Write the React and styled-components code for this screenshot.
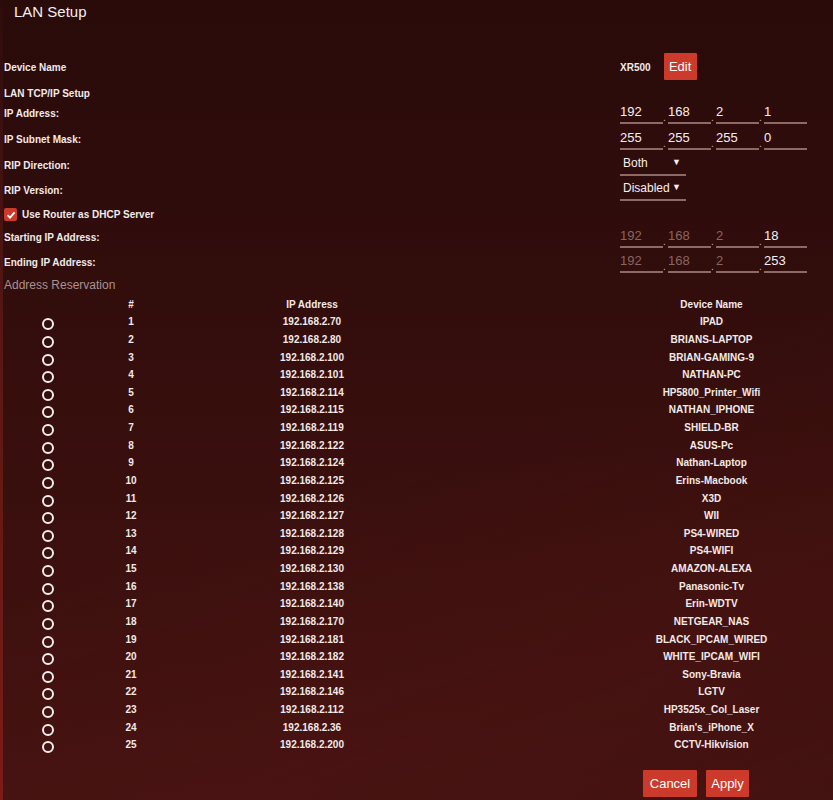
import styled, { createGlobalStyle } from 'styled-components'

const GlobalStyle = createGlobalStyle`
  html, body { margin: 0; padding: 0; }
  body {
    font-family: "Liberation Sans", Arial, sans-serif;
    background: #2c0c0b;
    color: #f2e9e8;
  }
`

const reservations = [
  ['192.168.2.70', 'IPAD'],
  ['192.168.2.80', 'BRIANS-LAPTOP'],
  ['192.168.2.100', 'BRIAN-GAMING-9'],
  ['192.168.2.101', 'NATHAN-PC'],
  ['192.168.2.114', 'HP5800_Printer_Wifi'],
  ['192.168.2.115', 'NATHAN_IPHONE'],
  ['192.168.2.119', 'SHIELD-BR'],
  ['192.168.2.122', 'ASUS-Pc'],
  ['192.168.2.124', 'Nathan-Laptop'],
  ['192.168.2.125', 'Erins-Macbook'],
  ['192.168.2.126', 'X3D'],
  ['192.168.2.127', 'WII'],
  ['192.168.2.128', 'PS4-WIRED'],
  ['192.168.2.129', 'PS4-WIFI'],
  ['192.168.2.130', 'AMAZON-ALEXA'],
  ['192.168.2.138', 'Panasonic-Tv'],
  ['192.168.2.140', 'Erin-WDTV'],
  ['192.168.2.170', 'NETGEAR_NAS'],
  ['192.168.2.181', 'BLACK_IPCAM_WIRED'],
  ['192.168.2.182', 'WHITE_IPCAM_WIFI'],
  ['192.168.2.141', 'Sony-Bravia'],
  ['192.168.2.146', 'LGTV'],
  ['192.168.2.112', 'HP3525x_Col_Laser'],
  ['192.168.2.36', "Brian's_iPhone_X"],
  ['192.168.2.200', 'CCTV-Hikvision'],
]

function IpField({ parts, dim }) {
  return (
    <IpGroup>
      {parts.map((p, i) => (
        <IpCell key={i}>
          {i > 0 && <Dot>.</Dot>}
          <Octet defaultValue={p} $dim={dim && i < 3} readOnly={dim && i < 3} />
        </IpCell>
      ))}
    </IpGroup>
  )
}

export default function App() {
  return (
    <Page>
      <GlobalStyle />
      <Title>LAN Setup</Title>

      <Form>
        <Row $h={29} $top={26} $center>
          <Label>Device Name</Label>
          <Control>
            <DeviceName>XR500</DeviceName>
            <RedButton $w={33}>Edit</RedButton>
          </Control>
        </Row>
        <Row $h={20}>
          <Label>LAN TCP/IP Setup</Label>
        </Row>
        <Row $h={26}>
          <Label>IP Address:</Label>
          <IpField parts={['192', '168', '2', '1']} />
        </Row>
        <Row $h={26}>
          <Label>IP Subnet Mask:</Label>
          <IpField parts={['255', '255', '255', '0']} />
        </Row>
        <Row $h={25}>
          <Label>RIP Direction:</Label>
          <Select>Both<Arrow>▼</Arrow></Select>
        </Row>
        <Row $h={26}>
          <Label>RIP Version:</Label>
          <Select>Disabled<Arrow>▼</Arrow></Select>
        </Row>
        <Row $h={21}>
          <CheckLabel>
            <Check>
              <svg width="10" height="10" viewBox="0 0 10 10">
                <path d="M1.5 5.2 L4 7.6 L8.6 2.4" fill="none" stroke="#fff" strokeWidth="1.8" />
              </svg>
            </Check>
            Use Router as DHCP Server
          </CheckLabel>
        </Row>
        <Row $h={25}>
          <Label>Starting IP Address:</Label>
          <IpField parts={['192', '168', '2', '18']} dim />
        </Row>
        <Row $h={24}>
          <Label>Ending IP Address:</Label>
          <IpField parts={['192', '168', '2', '253']} dim />
        </Row>
      </Form>

      <Section>Address Reservation</Section>

      <Table>
        <HeadRow>
          <Cell />
          <Cell>#</Cell>
          <Cell>IP Address</Cell>
          <Cell />
          <Cell>Device Name</Cell>
        </HeadRow>
        {reservations.map(([ip, name], i) => (
          <BodyRow key={i}>
            <Cell><Radio /></Cell>
            <Cell>{i + 1}</Cell>
            <Cell>{ip}</Cell>
            <Cell />
            <Cell>{name}</Cell>
          </BodyRow>
        ))}
      </Table>

      <Actions>
        <RedButton $w={54}>Cancel</RedButton>
        <RedButton $w={43}>Apply</RedButton>
      </Actions>
    </Page>
  )
}

const Page = styled.div`
  height: 800px;
  overflow: hidden;
  box-sizing: border-box;
  border-left: 3px solid #4a1410;
  border-image: linear-gradient(to bottom, #2c0c0b, #5a1814 45%, #7a1d16) 1;
  background:
    linear-gradient(160deg, rgba(255,255,255,0) 55%, rgba(120,30,25,0.1) 80%, rgba(255,255,255,0) 100%),
    linear-gradient(to bottom, #290b0a 0%, #310d0c 35%, #3c100e 70%, #431211 100%);
`

const Title = styled.h1`
  margin: 0;
  padding: 2px 0 0 11px;
  height: 24px;
  font-size: 15px;
  font-weight: normal;
  line-height: 20px;
  color: #f5eeee;
`

const Form = styled.div`
  display: flex;
  flex-direction: column;
`

const Row = styled.div`
  display: grid;
  grid-template-columns: 617px 1fr;
  align-items: ${p => (p.$center ? 'center' : 'start')};
  height: ${p => p.$h}px;
  margin-top: ${p => p.$top || 0}px;
`

const Label = styled.div`
  padding: 2px 0 0 1px;
  font-size: 10px;
  font-weight: bold;
  line-height: 21px;
  color: #f2e9e8;
`

const Control = styled.div`
  display: flex;
  align-items: center;
  gap: 13px;
`

const DeviceName = styled.span`
  font-size: 10px;
  font-weight: bold;
  padding-top: 2px;
`

const RedButton = styled.button`
  width: ${p => p.$w}px;
  height: 27px;
  padding: 0;
  border: none;
  border-radius: 1px;
  background: #cc3a2b;
  color: #fff;
  font-family: "Liberation Sans", Arial, sans-serif;
  font-size: 13px;
`

const IpGroup = styled.div`
  display: flex;
`

const IpCell = styled.div`
  display: flex;
  align-items: flex-end;
`

const Dot = styled.span`
  width: 5px;
  font-size: 10px;
  line-height: 10px;
  padding-bottom: 1px;
  color: #c9b5b3;
  text-align: left;
`

const Octet = styled.input`
  width: 43px;
  height: 23px;
  box-sizing: border-box;
  padding: 0;
  border: none;
  border-bottom: 2px solid #8d6a66;
  background: transparent;
  outline: none;
  font-family: "Liberation Sans", Arial, sans-serif;
  font-size: 13px;
  color: ${p => (p.$dim ? '#8a6560' : '#f7efee')};
`

const Select = styled.div`
  position: relative;
  width: 66px;
  height: 23px;
  box-sizing: border-box;
  padding: 3px 0 0 3px;
  border-bottom: 2px solid #8d6a66;
  font-size: 12px;
  line-height: 15px;
  color: #f7efee;
`

const Arrow = styled.span`
  position: absolute;
  right: 5px;
  top: 3px;
  font-size: 9px;
  line-height: 12px;
`

const CheckLabel = styled.div`
  display: flex;
  align-items: center;
  gap: 5px;
  padding-left: 1px;
  font-size: 10px;
  font-weight: bold;
  line-height: 21px;
`

const Check = styled.span`
  display: inline-flex;
  align-items: center;
  justify-content: center;
  width: 13px;
  height: 13px;
  border-radius: 2px;
  background: #cc3a2b;
`

const Section = styled.div`
  height: 21px;
  padding: 1px 0 0 1px;
  box-sizing: border-box;
  font-size: 12px;
  line-height: 20px;
  color: #a89392;
`

const Table = styled.div`
  display: flex;
  flex-direction: column;
`

const HeadRow = styled.div`
  display: grid;
  grid-template-columns: 90px 76px 286px 135px 243px;
  height: 18px;
  align-items: center;
`

const BodyRow = styled(HeadRow)`
  height: 17.625px;
`

const Cell = styled.div`
  display: flex;
  justify-content: center;
  align-items: center;
  font-size: 10px;
  font-weight: bold;
  color: #f2e9e8;
  white-space: nowrap;
`

const Radio = styled.span`
  width: 8px;
  height: 8px;
  margin-top: 5px;
  border: 2px solid #f5eeee;
  border-radius: 50%;
`

const Actions = styled.div`
  display: flex;
  justify-content: flex-end;
  gap: 9px;
  padding: 16px 84px 0 0;
`
